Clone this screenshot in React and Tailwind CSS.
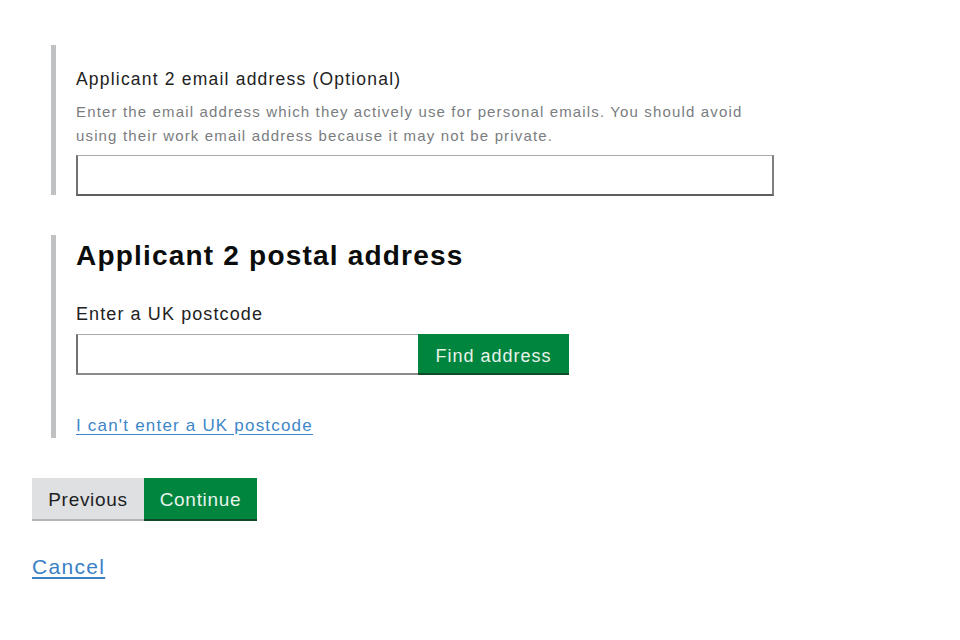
export default function App() {
  return (
    <div className="min-h-screen w-[960px] h-[640px] bg-white text-[#0b0c0c] font-['Liberation_Sans',Arial,sans-serif]">
      <div className="pl-[32px] pt-[45px]">
        {/* Email field group */}
        <div className="ml-[19px] border-l-[5px] border-[#bfc1c3] pl-[20px] pt-[24px] h-[150px]">
          <label className="block text-[17.5px] leading-[20px] tracking-[1.2px] text-[#222]">
            Applicant 2 email address (Optional)
          </label>
          <p className="mt-[11px] text-[15px] leading-[24px] tracking-[1.15px] text-[#7a7d80]">
            Enter the email address which they actively use for personal emails. You should avoid
            <br />
            using their work email address because it may not be private.
          </p>
          <input
            type="text"
            className="mt-[7px] block w-[698px] h-[41px] border border-[#a8aaac] border-l-[2px] border-l-[#6f7173] border-b-[2px] border-b-[#5c5e60] border-r-[2px] border-r-[#7d7f81] bg-white outline-none"
          />
        </div>

        {/* Postal address group */}
        <div className="mt-[40px] ml-[19px] border-l-[5px] border-[#bfc1c3] pl-[20px] h-[203px]">
          <h2 className="pt-[5px] text-[28px] leading-[32px] font-bold tracking-[1.2px] text-[#0b0c0c]">
            Applicant 2 postal address
          </h2>
          <label className="block mt-[32px] text-[18px] leading-[20px] tracking-[1.1px] text-[#222]">
            Enter a UK postcode
          </label>
          <div className="mt-[10px] flex">
            <input
              type="text"
              className="block w-[342px] h-[41px] border border-[#a8aaac] border-l-[2px] border-l-[#6f7173] border-b-[2px] border-b-[#8a8c8e] border-r-0 bg-white outline-none"
            />
            <button className="w-[151px] h-[41px] bg-[#00853e] text-[#e8f3ea] text-[18px] tracking-[1px] pt-[5px] border-b-[2px] border-[#0f4a27]">
              Find address
            </button>
          </div>
          <a href="#" className="inline-block mt-[41px] text-[17px] leading-[20px] tracking-[1.2px] text-[#3d86c9] underline underline-offset-[3px]">
            I can't enter a UK postcode
          </a>
        </div>

        {/* Navigation buttons */}
        <div className="mt-[40px] flex">
          <button className="w-[112px] h-[43px] bg-[#dee0e2] text-[#1f1f1f] text-[19px] tracking-[0.7px] pt-[4px] border-b-[2px] border-[#b3b5b7]">
            Previous
          </button>
          <button className="w-[113px] h-[43px] bg-[#00853e] text-[#e8f3ea] text-[19px] tracking-[0.7px] pt-[4px] border-b-[2px] border-[#0f4a27]">
            Continue
          </button>
        </div>

        <a href="#" className="inline-block mt-[34px] text-[21px] leading-[24px] tracking-[1.3px] text-[#3a80c6] underline underline-offset-[3px]">
          Cancel
        </a>
      </div>
    </div>
  );
}
